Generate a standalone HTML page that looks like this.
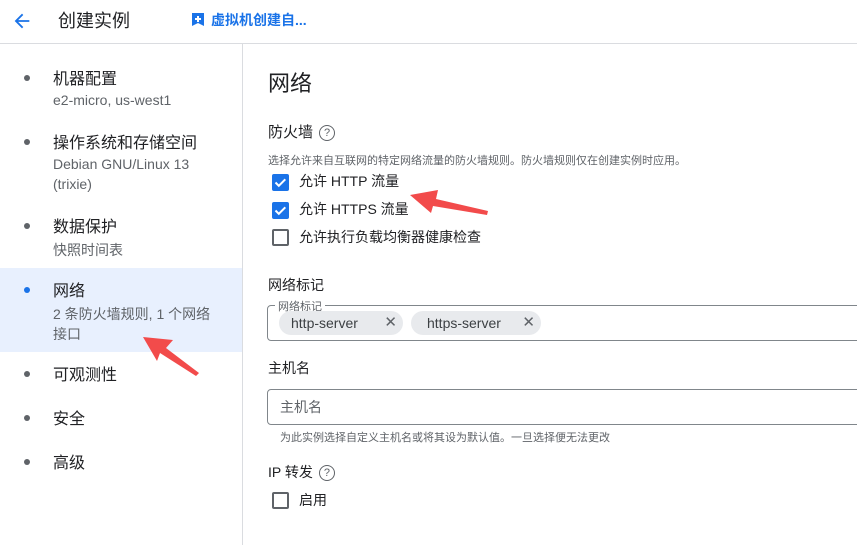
<!DOCTYPE html>
<html><head><meta charset="utf-8"><style>
*{box-sizing:border-box;margin:0;padding:0}
body{width:857px;height:545px;overflow:hidden;background:#fff;font-family:"Liberation Sans","Noto Sans CJK SC",sans-serif;color:#202124;position:relative}
.abs{position:absolute;white-space:nowrap}
.hdr{position:absolute;left:0;top:0;width:857px;height:44px;border-bottom:1px solid #dadce0}
.side{position:absolute;left:242px;top:44px;width:1px;height:501px;background:#dadce0}
.sel{position:absolute;left:0;top:268px;width:242px;height:84px;background:#e8f0fe}
.dot{position:absolute;left:24px;width:6px;height:6px;border-radius:50%;background:#5f6368}
.t{font-size:16px;color:#202124}
.s{font-size:14px;color:#5f6368}
.cb{position:absolute;left:272px;width:17px;height:17px;border-radius:2px}
.on{background:#1a73e8}
.off{border:2px solid #5f6368}
.chip{position:absolute;top:311px;height:24px;border-radius:12px;background:#e8eaed;font-size:14px;color:#3c4043;padding-left:12px;line-height:24px}
.q{display:inline-block;width:16px;height:16px;border:1.3px solid #5f6368;border-radius:50%;font-size:11px;line-height:14px;text-align:center;color:#5f6368;vertical-align:1px;margin-left:6px}
</style></head><body>
<div class="hdr"></div>
<svg class="abs" style="left:11px;top:10px" width="22" height="22" viewBox="0 0 24 24"><path d="M20 11H7.8l5.6-5.6L12 4l-8 8 8 8 1.4-1.4L7.8 13H20z" fill="#1a73e8"/></svg>
<div class="abs" style="left:58px;top:7px;font-size:18px">创建实例</div>
<svg class="abs" style="left:191px;top:12px" width="14" height="15" viewBox="0 0 14 15"><path d="M1 1h12v13l-6-3-6 3z" fill="#1a73e8"/><path d="M7 4v6M4 7h6" stroke="#fff" stroke-width="2"/></svg>
<div class="abs" style="left:211px;top:10px;font-size:14px;color:#1a73e8;font-weight:bold">虚拟机创建自...</div>
<div class="side"></div>
<div class="sel"></div>
<div class="dot" style="top:75px"></div><div class="abs t" style="left:53px;top:65px">机器配置</div><div class="abs s" style="left:53px;top:92px">e2-micro, us-west1</div>
<div class="dot" style="top:139px"></div><div class="abs t" style="left:53px;top:129px">操作系统和存储空间</div><div class="abs s" style="left:53px;top:156px">Debian GNU/Linux 13</div><div class="abs s" style="left:53px;top:176px">(trixie)</div>
<div class="dot" style="top:223px"></div><div class="abs t" style="left:53px;top:213px">数据保护</div><div class="abs s" style="left:53px;top:240px">快照时间表</div>
<div class="dot" style="top:287px;background:#1a73e8"></div><div class="abs t" style="left:53px;top:277px">网络</div><div class="abs s" style="left:53px;top:304px">2 条防火墙规则, 1 个网络</div><div class="abs s" style="left:53px;top:324px">接口</div>
<div class="dot" style="top:371px"></div><div class="abs t" style="left:53px;top:361px">可观测性</div>
<div class="dot" style="top:415px"></div><div class="abs t" style="left:53px;top:405px">安全</div>
<div class="dot" style="top:459px"></div><div class="abs t" style="left:53px;top:449px">高级</div>

<div class="abs" style="left:268px;top:66px;font-size:22px">网络</div>
<div class="abs" style="left:268px;top:121px;font-size:15px">防火墙<span class="q">?</span></div>
<div class="abs" style="left:268px;top:152px;font-size:11px;color:#5f6368">选择允许来自互联网的特定网络流量的防火墙规则。防火墙规则仅在创建实例时应用。</div>
<div class="cb on" style="top:174px"><svg width="17" height="17" viewBox="0 0 17 17"><path d="M3.5 8.5l3.3 3.3 6.5-6.5" stroke="#fff" stroke-width="2" fill="none"/></svg></div>
<div class="abs" style="left:299px;top:171px;font-size:14px">允许 HTTP 流量</div>
<div class="cb on" style="top:202px"><svg width="17" height="17" viewBox="0 0 17 17"><path d="M3.5 8.5l3.3 3.3 6.5-6.5" stroke="#fff" stroke-width="2" fill="none"/></svg></div>
<div class="abs" style="left:299px;top:199px;font-size:14px">允许 HTTPS 流量</div>
<div class="cb off" style="top:229px"></div>
<div class="abs" style="left:299px;top:227px;font-size:14px">允许执行负载均衡器健康检查</div>

<div class="abs" style="left:268px;top:275px;font-size:14px">网络标记</div>
<div class="abs" style="left:267px;top:305px;width:600px;height:36px;border:1px solid #80868b;border-radius:4px"></div>
<div class="abs" style="left:275px;top:298px;font-size:11px;color:#5f6368;background:#fff;padding:0 3px">网络标记</div>
<div class="chip" style="left:279px;width:124px">http-server<span style="position:absolute;right:6px;font-size:15px;color:#5f6368">✕</span></div>
<div class="chip" style="left:411px;width:130px;padding-left:16px">https-server<span style="position:absolute;right:6px;font-size:15px;color:#5f6368">✕</span></div>

<div class="abs" style="left:268px;top:358px;font-size:14px">主机名</div>
<div class="abs" style="left:267px;top:389px;width:600px;height:36px;border:1px solid #80868b;border-radius:4px"></div>
<div class="abs" style="left:280px;top:397px;font-size:14px;color:#5f6368">主机名</div>
<div class="abs" style="left:280px;top:429px;font-size:11px;color:#5f6368">为此实例选择自定义主机名或将其设为默认值。一旦选择便无法更改</div>

<div class="abs" style="left:268px;top:462px;font-size:14px">IP 转发<span class="q">?</span></div>
<div class="cb off" style="top:492px"></div>
<div class="abs" style="left:299px;top:490px;font-size:14px">启用</div>

<svg class="abs" style="left:0;top:0" width="857" height="545">
<polygon points="410,195 438,190 436,199 488,211 487,215 433,206 431,213" fill="#f24b4b"/>
<polygon points="143,337 173,340 166,348 199,373 196,376 160,353 157,361" fill="#f24b4b"/>
</svg>
</body></html>
